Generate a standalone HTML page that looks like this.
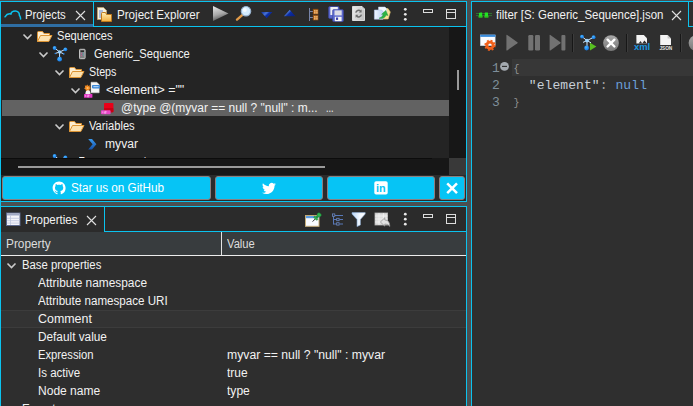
<!DOCTYPE html>
<html><head><meta charset="utf-8">
<style>
*{margin:0;padding:0;box-sizing:border-box}
html,body{width:693px;height:406px;overflow:hidden;background:#4b4f51}
body{position:relative;font-family:"Liberation Sans",sans-serif;font-size:12px;color:#eee}
.a{position:absolute}
.t{position:absolute;white-space:nowrap;line-height:18px;height:18px;color:#f2f2f2;transform-origin:0 0}
.cy{position:absolute;background:#0bc3ef}
.mono{font-family:"Liberation Mono",monospace;font-size:13px;letter-spacing:0.08px;position:absolute;white-space:pre;line-height:17px}
svg{position:absolute;overflow:visible}
.btn{position:absolute;top:176px;height:24px;background:#06c4f5;border:1px solid #8a8080;border-radius:3px}
</style></head><body>
<!-- ===== LEFT TOP PANEL ===== -->
<div class="a" style="left:1px;top:2px;width:465px;height:199px;background:#2b2b2b"></div>
<div class="a" style="left:1px;top:27px;width:448px;height:131px;background:#242424"></div>
<div class="a" style="left:449px;top:27px;width:17px;height:131px;background:#171717"></div>
<div class="a" style="left:457px;top:70px;width:2px;height:20px;background:#9a9a9a"></div>
<div class="a" style="left:1px;top:158px;width:448px;height:17px;background:#171717"></div>
<div class="a" style="left:449px;top:158px;width:17px;height:17px;background:#393939"></div>
<div class="a" style="left:18px;top:166px;width:307px;height:2px;background:#9a9a9a"></div>
<div class="a" style="left:2px;top:100px;width:447px;height:16px;background:#626262"></div>
<div class="a" style="left:1px;top:158px;width:431px;height:1px;background:#0c0c0c"></div>
<div class="a" style="left:1px;top:24px;width:92px;height:3px;background:#2f6ea3"></div>
<div class="cy" style="left:93px;top:2px;width:1px;height:25px"></div>
<div class="cy" style="left:93px;top:26px;width:373px;height:1px"></div>
<div class="btn" style="left:2px;width:209px"></div>
<div class="btn" style="left:215px;width:108px"></div>
<div class="btn" style="left:327px;width:108px"></div>
<div class="btn" style="left:439px;width:26px"></div>
<div class="a" style="left:0;top:0;width:693px;height:1px;background:#4b4f51"></div>
<div class="cy" style="left:0;top:1px;width:467px;height:1px"></div>
<div class="cy" style="left:0;top:1px;width:1px;height:405px"></div>
<div class="cy" style="left:466px;top:1px;width:1px;height:201px"></div>
<div class="cy" style="left:0;top:201px;width:467px;height:1px"></div>
<!-- ===== LEFT BOTTOM PANEL ===== -->
<div class="a" style="left:1px;top:207px;width:465px;height:199px;background:#2b2b2b"></div>
<div class="a" style="left:1px;top:256px;width:465px;height:150px;background:#2e2e2e"></div>
<div class="a" style="left:1px;top:232px;width:465px;height:23px;background:#383c3e"></div>
<div class="a" style="left:1px;top:255px;width:465px;height:1px;background:#ececec"></div>
<div class="a" style="left:221px;top:232px;width:1px;height:23px;background:#e4e4e4"></div>
<div class="a" style="left:1px;top:310px;width:465px;height:18px;background:#333;border-top:1px solid #3c3c3c;border-bottom:1px solid #3c3c3c"></div>
<div class="cy" style="left:0;top:206px;width:467px;height:1px"></div>
<div class="cy" style="left:466px;top:206px;width:1px;height:200px"></div>
<div class="cy" style="left:104px;top:207px;width:1px;height:25px"></div>
<div class="cy" style="left:104px;top:231px;width:363px;height:1px"></div>
<!-- ===== RIGHT PANEL ===== -->
<div class="a" style="left:472px;top:2px;width:221px;height:404px;background:#2f2f2f"></div>
<div class="a" style="left:512px;top:59px;width:181px;height:17px;background:#373737"></div>
<div class="cy" style="left:471px;top:1px;width:222px;height:1px"></div>
<div class="cy" style="left:471px;top:1px;width:1px;height:405px"></div>
<div class="cy" style="left:688px;top:2px;width:1px;height:25px"></div>
<div class="cy" style="left:688px;top:26px;width:5px;height:1px"></div>
<div class="mono" style="left:492px;top:60px;color:#7e8e9a">1</div>
<div class="mono" style="left:492px;top:77px;color:#7e8e9a">2</div>
<div class="mono" style="left:492px;top:94px;color:#7e8e9a">3</div>
<div class="mono" style="left:513.6px;top:61px;color:#949494;font-size:10px">{</div>
<div class="mono" style="left:513px;top:77px;color:#c8d0d8">  "element"<span style="color:#a0a0a0">:</span> <span style="color:#6c9fd8">null</span></div>
<div class="mono" style="left:513.6px;top:94.5px;color:#949494;font-size:10px">}</div>
<div class="a" style="left:1px;top:27px;width:448px;height:131px;overflow:hidden"><div class="t" style="left:78px;top:125.5px;transform:scaleX(0.7533)">Transparency_ok</div></div>
<div class="t" style="left:25.3px;top:6px;transform:scaleX(0.9390);">Projects</div>
<div class="t" style="left:116.7px;top:6px;transform:scaleX(0.9677);">Project Explorer</div>
<div class="t" style="left:57.3px;top:27px;transform:scaleX(0.9229);">Sequences</div>
<div class="t" style="left:94.3px;top:45px;transform:scaleX(0.9317);">Generic_Sequence</div>
<div class="t" style="left:89.3px;top:63px;transform:scaleX(0.8933);">Steps</div>
<div class="t" style="left:106px;top:81px;transform:scaleX(1.0358);">&lt;element&gt; =""</div>
<div class="t" style="left:121.2px;top:99px;transform:scaleX(0.9983);">@type @(myvar == null ? "null" : m...</div>
<div class="t" style="left:326px;top:99px;transform:scaleX(0.7612);">...</div>
<div class="t" style="left:89.3px;top:117px;transform:scaleX(0.9300);">Variables</div>
<div class="t" style="left:105.3px;top:135px;transform:scaleX(1.0100);">myvar</div>
<div class="t" style="left:71px;top:179px;transform:scaleX(0.9754);color:#fff;">Star us on GitHub</div>
<div class="t" style="left:25px;top:211px;transform:scaleX(0.9600);">Properties</div>
<div class="t" style="left:6px;top:235px;transform:scaleX(0.9858);color:#ddd;">Property</div>
<div class="t" style="left:227px;top:235px;transform:scaleX(0.9330);color:#ddd;">Value</div>
<div class="t" style="left:22px;top:256px;transform:scaleX(0.9437);">Base properties</div>
<div class="t" style="left:38.1px;top:274px;transform:scaleX(0.9906);">Attribute namespace</div>
<div class="t" style="left:38.1px;top:292px;transform:scaleX(0.9677);">Attribute namespace URI</div>
<div class="t" style="left:37.8px;top:310px;transform:scaleX(1.0362);">Comment</div>
<div class="t" style="left:37.8px;top:328px;transform:scaleX(0.9838);">Default value</div>
<div class="t" style="left:37.8px;top:346px;transform:scaleX(0.9367);">Expression</div>
<div class="t" style="left:37.8px;top:364px;transform:scaleX(0.9591);">Is active</div>
<div class="t" style="left:37.8px;top:382px;transform:scaleX(1.0027);">Node name</div>
<div class="t" style="left:22.3px;top:400px;transform:scaleX(0.9662);">Expert</div>
<div class="t" style="left:227px;top:346px;transform:scaleX(1.0177);">myvar == null ? "null" : myvar</div>
<div class="t" style="left:227px;top:364px;transform:scaleX(0.9965);">true</div>
<div class="t" style="left:227px;top:382px;transform:scaleX(1.0057);">type</div>
<div class="t" style="left:495.7px;top:6px;transform:scaleX(0.9540);">filter [S: Generic_Sequence].json</div>
<svg width="693" height="406" viewBox="0 0 693 406" style="left:0;top:0">
<defs>
<linearGradient id="gFold" x1="0" y1="0" x2="0" y2="1"><stop offset="0" stop-color="#fff0b8"/><stop offset="1" stop-color="#f4b040"/></linearGradient>
<linearGradient id="gPlay" x1="0.2" y1="0" x2="0.5" y2="1"><stop offset="0" stop-color="#e4e4e4"/><stop offset="0.55" stop-color="#a8a8a8"/><stop offset="1" stop-color="#4c4c4c"/></linearGradient>
<linearGradient id="gBlue" x1="0" y1="0" x2="1" y2="0.6"><stop offset="0" stop-color="#0a2a9c"/><stop offset="0.42" stop-color="#4a74d4"/><stop offset="0.6" stop-color="#0c2ea4"/><stop offset="1" stop-color="#08228c"/></linearGradient>
<linearGradient id="gFun" x1="0" y1="0" x2="1" y2="0"><stop offset="0" stop-color="#b8d6f8"/><stop offset="0.6" stop-color="#f4f9ff"/><stop offset="1" stop-color="#ffffff"/></linearGradient>
<linearGradient id="gChev" x1="0" y1="0" x2="0" y2="1"><stop offset="0" stop-color="#3a9af0"/><stop offset="1" stop-color="#1450a8"/></linearGradient>
<radialGradient id="gNode" cx="0.4" cy="0.35" r="0.7"><stop offset="0" stop-color="#4cb4ff"/><stop offset="1" stop-color="#0c74e4"/></radialGradient>
<linearGradient id="gDoc" x1="0" y1="0" x2="1" y2="0.3"><stop offset="0" stop-color="#ececec"/><stop offset="1" stop-color="#c4c4c4"/></linearGradient><linearGradient id="gImp" x1="0" y1="0" x2="1" y2="0"><stop offset="0" stop-color="#f0f5ff"/><stop offset="1" stop-color="#b8d0f4"/></linearGradient>
<linearGradient id="gStop" x1="0" y1="0" x2="0" y2="1"><stop offset="0" stop-color="#a8a8a8"/><stop offset="1" stop-color="#787878"/></linearGradient>
<g id="ofolder">
  <path d="M0.5 10.5 V1.5 Q0.5 0.5 1.5 0.5 H5.5 L7 2.5 H12.5 V4.5" fill="#fdeed0" stroke="#dc9434" stroke-width="1"/>
  <path d="M0.5 10.5 L3.5 4.5 H15 L11.8 10.5 Z" fill="#fce2b0" stroke="#dc9434" stroke-width="1" stroke-linejoin="round"/>
</g>
<g id="chev"><path d="M0.5 0.5 L4.5 4.5 L8.5 0.5" fill="none" stroke="#cacaca" stroke-width="1.6"/></g>
<g id="xclose"><path d="M0 0 L9 9 M9 0 L0 9" stroke="#e0e0e0" stroke-width="1.1" fill="none"/></g>
<g id="kebab"><circle cx="0" cy="0" r="1.4" fill="#e8e8e8"/><circle cx="0" cy="5" r="1.4" fill="#e8e8e8"/><circle cx="0" cy="10" r="1.4" fill="#e8e8e8"/></g>
<g id="mini"><rect x="0.5" y="0.5" width="9" height="3" fill="none" stroke="#dcdcdc" stroke-width="1"/></g>
<g id="maxi"><rect x="0.5" y="0.5" width="9" height="9" fill="none" stroke="#dcdcdc" stroke-width="1"/><path d="M0.5 3.5 H9.5" stroke="#dcdcdc"/></g>
</defs>

<!-- Projects cloud icon -->
<path d="M5 16.8 C6.4 14.6 8.6 13.3 10.9 14.1 C11.2 12.3 13.2 11 15.3 11 C18 11 19.5 13 19.4 15.2 C20.2 16.2 20.6 17.6 20.6 19" fill="none" stroke="#0bc3ef" stroke-width="1.5" stroke-linecap="round" stroke-linejoin="miter"/>
<use href="#xclose" x="76" y="11"/>
<!-- Project explorer icon -->
<path d="M97.5 7.5 H103.5 L106.5 10.5 V19.5 H97.5 Z" fill="#f4f0e0" stroke="#b8a070"/>
<path d="M99 11 H103 M99 13 H103 M99 15 H102 M99 17 H102" stroke="#5a80d0" stroke-width="0.9"/>
<path d="M101.5 21.5 V13.5 Q101.5 12.5 102.5 12.5 H105.5 L106.5 14.5 H111.5 V21.5 Z" fill="url(#gFold)" stroke="#c07818"/>
<!-- play -->
<path d="M213 6 L228.5 13.5 L213 21 Z" fill="url(#gPlay)"/>
<!-- magnifier -->
<path d="M242.5 14.8 L237 19.6" stroke="#e09a48" stroke-width="2.4" stroke-linecap="round"/>
<circle cx="246" cy="11.2" r="4.7" fill="#d4ecff" stroke="#9ab4d0" stroke-width="1.2"/>
<circle cx="244.8" cy="10" r="2" fill="#f4faff"/>
<!-- arrows -->
<path d="M261 12 H272.4 L266.7 18.3 Z" fill="url(#gBlue)"/>
<path d="M284 16.2 H295.4 L289.7 9.8 Z" fill="url(#gBlue)"/>
<!-- hierarchy icon -->
<path d="M309.5 8 V21 M309.5 11.5 H313 M309.5 17.5 H313" stroke="#7884a8" fill="none"/>
<rect x="313.2" y="9.2" width="4.8" height="4.8" fill="#c8741e" stroke="#8c4c12" stroke-width="0.7"/><rect x="313.2" y="15.2" width="4.8" height="4.8" fill="#c8741e" stroke="#8c4c12" stroke-width="0.7"/>
<path d="M314.3 10.3 h1.1 v1.1 h-1.1z m2.1 0 h1.1 v1.1 h-1.1z m-2.1 2 h1.1 v1.1 h-1.1z m2.1 0 h1.1 v1.1 h-1.1z M314.3 16.3 h1.1 v1.1 h-1.1z m2.1 0 h1.1 v1.1 h-1.1z m-2.1 2 h1.1 v1.1 h-1.1z m2.1 0 h1.1 v1.1 h-1.1z" fill="#ffe6bc"/>
<!-- save all -->
<g>
<rect x="328.6" y="6.6" width="10.6" height="11.8" rx="1.2" fill="#5c68cc" stroke="#3a44a4" stroke-width="0.6"/>
<rect x="330.4" y="7" width="7.4" height="8" fill="#f0f0f4"/>
<rect x="332.6" y="9.6" width="10.8" height="12" rx="1.2" fill="#5c68cc" stroke="#3a44a4" stroke-width="0.6"/>
<rect x="334.5" y="10.4" width="7.2" height="5" fill="#dcdce6"/>
<rect x="334.8" y="16.8" width="6.8" height="4.4" fill="#f4f4f6"/><rect x="336" y="17.5" width="2.1" height="2.4" fill="#3a40b0"/>
</g>
<!-- refresh doc -->
<path d="M352.5 6.5 H362 L364.5 9 V20.5 H352.5 Z" fill="url(#gDoc)" stroke="#f0f0f0" stroke-width="0.8"/>
<path d="M362 6.5 V9 H364.5" fill="#b8b8b8" stroke="#f0f0f0" stroke-width="0.5"/>
<path d="M355.8 12.6 A3 3 0 0 1 360.6 11 M361.4 14.6 A3 3 0 0 1 356.6 16.2" fill="none" stroke="#6c6c6c" stroke-width="1.5"/>
<path d="M361.6 9.4 V12.4 H358.8 Z M355.6 17.8 V14.8 H358.4 Z" fill="#6c6c6c"/>
<!-- folder import -->
<path d="M381 8.6 H388 L390.3 12 L388.2 19 H380 Z" fill="#f6e29a" stroke="#e4c468" stroke-width="0.6"/>
<path d="M378.5 7 H385 L386.6 8.6 V13 H378.5 Z" fill="#f2f7ff" stroke="#c0d0ec" stroke-width="0.5"/>
<path d="M374.4 10 H381.6 L384 12.6 L383 19.2 H374.4 Z" fill="url(#gImp)" stroke="#b4c4e8" stroke-width="0.6"/>
<path d="M379 18.2 Q382.2 17.6 383.4 14.6 L381.6 14.3 L385.8 10.4 L388 15.5 L386.1 15.1 Q384.4 19.4 379 18.2 Z" fill="#2cb444" stroke="#189030" stroke-width="0.4"/>
<use href="#kebab" x="405.3" y="9.3"/>
<use href="#mini" x="423" y="9"/>
<use href="#maxi" x="446" y="9"/>

<!-- TREE ICONS -->
<use href="#chev" x="23" y="34"/>
<use href="#ofolder" x="37" y="31"/>
<use href="#chev" x="39" y="52"/>
<!-- sequence icon -->
<g id="seqicon">
<path d="M59.6 52 L54.6 48 M59.6 52 L65.4 49.3 M59.6 52 V59 M59.6 52 L55.4 53.4 M59.6 52 L63.6 53.8" stroke="#cfe6ff" stroke-width="1" fill="none"/>
<circle cx="54.6" cy="48" r="1.9" fill="url(#gNode)"/>
<circle cx="65.4" cy="49.3" r="1.9" fill="url(#gNode)"/>
<circle cx="59.6" cy="59.2" r="2.4" fill="url(#gNode)"/>
<circle cx="59.6" cy="52" r="1.7" fill="#9ad4ff"/>
<circle cx="55.3" cy="53.5" r="0.8" fill="#2a88e8"/><circle cx="63.8" cy="53.9" r="0.8" fill="#2a88e8"/>
</g>
<clipPath id="ctree"><rect x="1" y="27" width="448" height="131"/></clipPath><g clip-path="url(#ctree)"><use href="#seqicon" x="0" y="108"/></g>
<!-- device -->
<rect x="79.5" y="49.3" width="5.6" height="9.4" rx="0.8" fill="#808080" stroke="#c4c4c4" stroke-width="1"/><rect x="80.6" y="50.4" width="3.4" height="1.6" fill="#2a2a2a"/>
<path d="M80.8 53.5 H82 M80.8 55.5 H82" stroke="#d050a0" stroke-width="0.8"/>
<path d="M82.8 53 H84 M82.8 55 H84" stroke="#50b0d0" stroke-width="0.7"/>
<use href="#chev" x="55" y="70"/>
<use href="#ofolder" x="69" y="67"/>
<use href="#chev" x="71" y="88"/>
<!-- element step icon -->
<path d="M91 82.2 H96.8 L99.2 84.6 V92.8 H91 Z" fill="#f6f6f6" stroke="#d4d4d4" stroke-width="0.5"/>
<rect x="92" y="85" width="7.9" height="3.4" rx="0.8" fill="#3a88d8"/>
<path d="M93.4 86.7 H98.6" stroke="#d4e8ff" stroke-width="0.9"/>
<path d="M85.4 95.4 Q85 90.6 87.8 89.6 Q90.6 90.2 90.6 95.4 Z" fill="#f2f2f2"/>
<path d="M87.2 84.6 L88.2 86 L89.8 85.2 L89.6 87 L90.8 88 L89.6 89.2 L89.4 90.6 L87.6 90.2 L86 91 L85.6 89.4 L84.2 88.4 L85.2 87.2 L84.8 85.6 L86.4 85.8 Z" fill="#f28a20"/>
<circle cx="87.6" cy="88" r="1.1" fill="#ffc070"/>
<rect x="84" y="94" width="8.4" height="3.8" rx="0.6" fill="#e238c4"/>
<path d="M85.6 95 V96.8 M87.3 95 H89 V95.9 H87.3 V96.8 H89" stroke="#ffc0f0" stroke-width="0.6" fill="none"/>
<!-- @type icon -->
<rect x="104" y="103" width="9.4" height="9.2" rx="0.8" fill="#ea0018"/>
<rect x="104" y="108" width="9.4" height="4.2" rx="0.8" fill="#c80014"/>
<rect x="101" y="110.3" width="9.6" height="4" rx="0.8" fill="#e848c8"/>
<path d="M102.8 111.4 V113.2 M104.4 111.4 H106.2 V112.3 H104.4 V113.2 H106.2" stroke="#ffc8f4" stroke-width="0.6" fill="none"/>
<use href="#chev" x="55" y="124"/>
<use href="#ofolder" x="69" y="121"/>
<!-- variable chevron -->
<path d="M88.2 139 H92 L96.4 144.3 L92 149.6 H88.2 L92.6 144.3 Z" fill="url(#gChev)"/>

<!-- BUTTON ICONS -->
<!-- github -->
<g transform="translate(52.6,181.6) scale(0.8125)">
<path fill="#fff" d="M8 0C3.58 0 0 3.58 0 8c0 3.54 2.29 6.53 5.47 7.59.4.07.55-.17.55-.38 0-.19-.01-.82-.01-1.49-2.01.37-2.53-.49-2.69-.94-.09-.23-.48-.94-.82-1.13-.28-.15-.68-.52-.01-.53.63-.01 1.08.58 1.23.82.72 1.21 1.87.87 2.33.66.07-.52.28-.87.51-1.07-1.78-.2-3.64-.89-3.64-3.95 0-.87.31-1.59.82-2.15-.08-.2-.36-1.02.08-2.12 0 0 .67-.21 2.2.82.64-.18 1.32-.27 2-.27s1.36.09 2 .27c1.53-1.04 2.2-.82 2.2-.82.44 1.1.16 1.92.08 2.12.51.56.82 1.27.82 2.15 0 3.07-1.87 3.75-3.65 3.95.29.25.54.73.54 1.48 0 1.07-.01 1.93-.01 2.2 0 .21.15.46.55.38A8.01 8.01 0 0 0 16 8c0-4.42-3.58-8-8-8z"/>
</g>
<!-- twitter -->
<g transform="translate(262,181.5) scale(0.58)">
<path fill="#fff" d="M23.953 4.57a10 10 0 01-2.825.775 4.958 4.958 0 002.163-2.723c-.951.555-2.005.959-3.127 1.184a4.92 4.92 0 00-8.384 4.482C7.69 8.095 4.067 6.13 1.64 3.162a4.822 4.822 0 00-.666 2.475c0 1.71.87 3.213 2.188 4.096a4.904 4.904 0 01-2.228-.616v.06a4.923 4.923 0 003.946 4.827 4.996 4.996 0 01-2.212.085 4.936 4.936 0 004.604 3.417 9.867 9.867 0 01-6.102 2.105c-.39 0-.779-.023-1.17-.067a13.995 13.995 0 007.557 2.209c9.053 0 13.998-7.496 13.998-13.985 0-.21 0-.42-.015-.63A9.935 9.935 0 0024 4.59z"/>
</g>
<!-- linkedin -->
<rect x="374.3" y="181.2" width="13.4" height="13.4" rx="1.8" fill="#fff"/>
<text x="376.1" y="192.2" font-family="Liberation Sans, sans-serif" font-weight="bold" font-size="10.5" fill="#06c4f5" textLength="9.6" lengthAdjust="spacingAndGlyphs">in</text>
<!-- X -->
<path d="M447.2 183.4 L457 193.2 M457 183.4 L447.2 193.2" stroke="#fff" stroke-width="2.5" fill="none"/>

<!-- PROPERTIES TAB -->
<rect x="6.5" y="213" width="13.5" height="12.5" fill="#f4f4fa" stroke="#5c688c"/>
<rect x="7" y="213.5" width="12.5" height="2" fill="#a0a8c4"/>
<path d="M7 218.3 H19.5 M7 220.7 H19.5 M7 223.1 H19.5 M10.5 215.5 V225" stroke="#bcc4dc" stroke-width="0.8"/>
<use href="#xclose" x="87" y="216"/>
<!-- pin window -->
<rect x="305.5" y="215.5" width="13.5" height="10.8" fill="#f8fbff" stroke="#c4ac78"/>
<rect x="306" y="216" width="12.5" height="2.2" fill="#5a9ae0"/>
<path d="M312.6 221.6 L315.6 218.6" stroke="#303030" stroke-width="1"/>
<g transform="rotate(45 317.4 216.6)"><rect x="315.4" y="212.4" width="4" height="3.4" rx="1.2" fill="#30b450" stroke="#168030" stroke-width="0.5"/><rect x="316.2" y="215.6" width="2.4" height="2.6" fill="#209840"/><rect x="315" y="218" width="4.8" height="1.8" rx="0.8" fill="#30b450" stroke="#168030" stroke-width="0.5"/></g>
<!-- tree icon -->
<path d="M333.5 215 V224.5 M333.5 219.5 H337 M333.5 224 H337 M335 215.5 H343 M339.5 219.5 H343 M339.5 224 H343" stroke="#5878b8" stroke-width="1" fill="none"/>
<rect x="332.4" y="213.9" width="2.4" height="2.4" fill="#2b2b2b" stroke="#6a88c4" stroke-width="0.8"/><rect x="336.7" y="218.3" width="2.4" height="2.4" fill="#2b2b2b" stroke="#6a88c4" stroke-width="0.8"/><rect x="336.7" y="222.7" width="2.4" height="2.4" fill="#2b2b2b" stroke="#6a88c4" stroke-width="0.8"/>
<!-- funnel -->
<path d="M352 212.6 H365.2 V214 L360.4 219.4 V225 L357 226.6 V219.4 L352 214 Z" fill="url(#gFun)" stroke="#88a8d0" stroke-width="0.6"/>
<!-- table restore -->
<rect x="375" y="213" width="12.6" height="12" fill="#dedede" stroke="#b8b8b8" stroke-width="0.8"/>
<path d="M375 216 H387.6 M375 219 H387.6 M375 222 H387.6 M379 213 V225 M383.4 213 V225" stroke="#f6f6f6" stroke-width="0.7"/>
<path d="M380.4 222 L384.8 217.8 V220 Q389.8 220 389.8 226.4 Q388 223.8 384.8 224 V226.2 Z" fill="#e2e2e2" stroke="#8c8c8c" stroke-width="0.7"/>
<use href="#kebab" x="405.3" y="214.2"/>
<use href="#mini" x="423" y="214"/>
<use href="#maxi" x="446" y="214"/>
<use href="#chev" x="7" y="263"/>

<!-- RIGHT PANEL -->
<path d="M476 13.5 H479.5 L480.5 12.5 H482 M482 13.5 H485 M485 12.5 H487.5 L488.5 13.5 H492 M476 15.6 H492" stroke="#2c7c30" stroke-width="0.9" fill="none"/>
<rect x="479" y="12.8" width="3.2" height="4.6" fill="#22e422"/><rect x="484.7" y="12.8" width="3.3" height="4.6" fill="#22e422"/>
<path d="M478.4 16 H482.6 V17.5 H478.4 Z M484.4 16 H488.6 V17.5 H484.4 Z" fill="#30c020"/>
<use href="#xclose" x="672" y="11"/>
<!-- toolbar -->
<rect x="480.5" y="35" width="14.6" height="10.6" fill="#fafcff" stroke="#d8e4f0" stroke-width="0.6"/>
<rect x="480.2" y="34.7" width="15.2" height="2.2" fill="#3a8cdc"/>
<g>
<circle cx="490" cy="45.3" r="3.2" fill="none" stroke="#f2601a" stroke-width="2.9"/>
<circle cx="490" cy="45.3" r="4.9" fill="none" stroke="#f2601a" stroke-width="1.5" stroke-dasharray="1.9 1.95"/>
</g>
<path d="M506.4 35.4 Q506.4 34.6 507.2 35 L517.4 42.2 Q518 42.7 517.4 43.2 L507.2 50.4 Q506.4 50.8 506.4 50 Z" fill="#727272"/>
<rect x="528.3" y="35" width="5" height="15.5" rx="1.2" fill="#727272"/><rect x="535" y="35" width="5" height="15.5" rx="1.2" fill="#727272"/>
<path d="M549.6 35.4 Q549.6 34.6 550.4 35 L560.4 42.2 Q561 42.7 560.4 43.2 L550.4 50.4 Q549.6 50.8 549.6 50 Z" fill="#727272"/>
<rect x="561.4" y="35" width="4" height="15.5" rx="1" fill="#727272"/>
<path d="M572.5 34 V52 M626.5 34 V52 M680.5 34 V52" stroke="#171717" stroke-width="1"/>
<path d="M573.5 34 V52 M627.5 34 V52 M681.5 34 V52" stroke="#3c3c3c" stroke-width="1"/>
<!-- seq run -->
<path d="M587 40.6 L582 36.6 M587 40.6 L593.4 37.4 M587 40.6 V47.6 M587 40.6 L583 42.4 M587 40.6 L591 42.8" stroke="#cfe6ff" stroke-width="1" fill="none"/>
<circle cx="582" cy="36.6" r="1.9" fill="url(#gNode)"/><circle cx="593.6" cy="37.2" r="1.9" fill="url(#gNode)"/>
<circle cx="586.6" cy="48" r="2.4" fill="url(#gNode)"/><circle cx="587" cy="40.6" r="1.8" fill="#9ad4ff"/>
<path d="M590 42.8 L596.4 46.6 L590 50.4 Z" fill="#58c020"/>
<!-- stop circle -->
<circle cx="611" cy="43.1" r="7.9" fill="url(#gStop)"/>
<path d="M607.6 39.7 L614.4 46.5 M614.4 39.7 L607.6 46.5" stroke="#fff" stroke-width="2.4" stroke-linecap="round"/>
<!-- xml -->
<path d="M636.4 35 H643.8 L647 38.2 V43.6 H636.4 Z" fill="#f4f4f4"/>
<path d="M638.6 43.6 L640.6 41 L642.2 43.6 L644.4 40.6 L647 43.6" fill="#2f2f2f" stroke="none"/>
<text x="634" y="50.3" font-family="Liberation Sans, sans-serif" font-weight="bold" font-size="9.5" fill="#1a98e0" textLength="16.2" lengthAdjust="spacingAndGlyphs">xml</text>
<!-- json -->
<path d="M660.2 35 H667.6 L671 38.4 V45 H660.2 Z" fill="#f4f4f4"/>
<path d="M667.6 35 V38.4 H671" fill="#c8c8c8"/>
<text x="659.4" y="49.8" font-family="Liberation Sans, sans-serif" font-weight="bold" font-size="5.6" fill="#e4e4e4" textLength="12.8" lengthAdjust="spacingAndGlyphs">JSON</text>
<circle cx="696.5" cy="43.1" r="7.9" fill="url(#gStop)"/>
<!-- fold -->
<circle cx="504.5" cy="66.4" r="4.4" fill="#a4aab0"/><path d="M502 66.4 H507" stroke="#2f2f2f" stroke-width="1.1"/>
</svg>

</body></html>
